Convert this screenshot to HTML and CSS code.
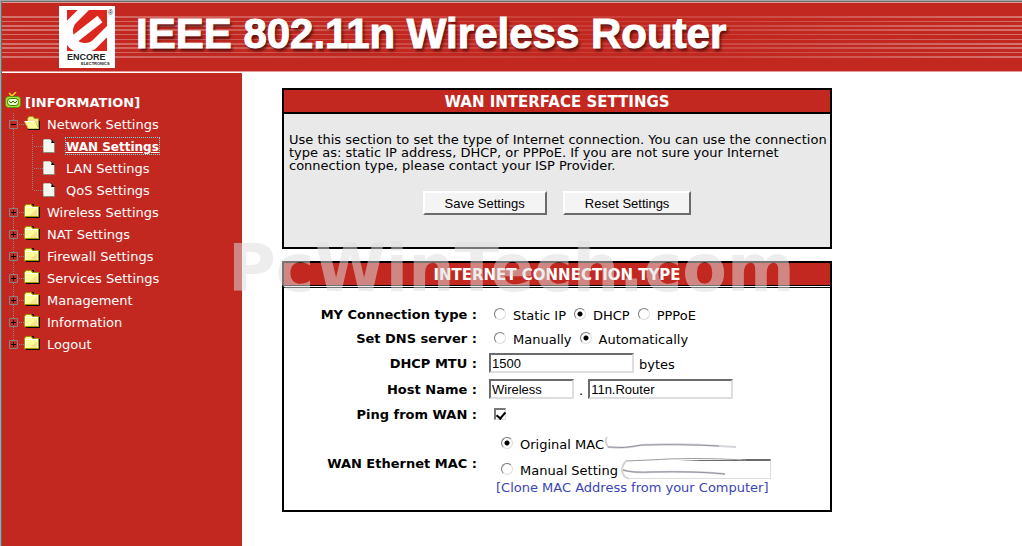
FILE: index.html
```html
<!DOCTYPE html>
<html lang="en">
<head>
  <meta charset="UTF-8">
  <meta name="viewport" content="width=device-width, initial-scale=1.0">
  <title>IEEE 802.11n Wireless Router</title>
  <link rel="stylesheet" href="styles.css">
</head>
<body>

<!-- shared tree icons -->
<svg class="icon-defs" width="0" height="0" aria-hidden="true">
  <symbol id="folder" viewBox="0 0 16 14">
    <path d="M2 13.5H15.5V3" fill="none" stroke="#000"/>
    <path d="M.5 12.5V2.5L2 .5H7L8.500 2.500H14.500V12.500Z" fill="#ffff9c" stroke="#9c9c00"/>
    <path d="M1.500 11.500V3.500H13.500" fill="none" stroke="#fff"/>
    <path d="M13 5V12H5Z" fill="#f7ce84" opacity=".6"/>
    <path d="M8 .5H9.500V2" fill="none" stroke="#000"/>
  </symbol>
  <symbol id="folder-open" viewBox="0 0 16 14">
    <path d="M4 13.500H15.500V5" fill="none" stroke="#000"/>
    <path d="M3.500 6V2.500L5 .5H9L10.500 2.500H14.500V12H3.500Z" fill="#f7e78c" stroke="#9c9c00"/>
    <path d="M.5 5.500H11.500L14.500 12.500H4.500Z" fill="#ffff9c" stroke="#cece63"/>
    <path d="M1 5.500H11" stroke="#fff"/>
  </symbol>
  <symbol id="plus" viewBox="0 0 9 9">
    <path d="M.5 .5H8.500V8.500H.5Z" fill="#c22820" stroke="#848484"/>
    <path d="M2 4.500H7M4.500 2V7" stroke="#000"/>
  </symbol>
  <symbol id="minus" viewBox="0 0 9 9">
    <path d="M.5 .5H8.500V8.500H.5Z" fill="#c22820" stroke="#848484"/>
    <path d="M2 4.500H7" stroke="#000"/>
  </symbol>
  <symbol id="branch" viewBox="0 0 40 22">
    <path class="dots" d="M11.500 0V22M17 11.500H22"/>
    <use href="#plus" x="7" y="7" width="9" height="9"/>
    <use href="#folder" x="22" y="3" width="16" height="14"/>
  </symbol>
  <symbol id="page" viewBox="0 0 12 14">
    <path d="M.5 .5H8L11.500 4V13.500H.5Z" fill="#f7f7f0" stroke="#8c8c7b"/>
    <path d="M1 12.500V1H7" fill="none" stroke="#fff"/>
    <path d="M8 0V4H12Z" fill="#000"/>
    <path d="M8 1V3.500" stroke="#fff"/>
  </symbol>
  <symbol id="leaf" viewBox="0 0 59 22">
    <path class="dots" d="M11.500 0V22M30.500 0V22M32 11.500H41"/>
    <use href="#page" x="41" y="4" width="12" height="14"/>
  </symbol>
  <symbol id="leaf-last" viewBox="0 0 59 22">
    <path class="dots" d="M11.500 0V22M30.500 0V11M32 11.500H41"/>
    <use href="#page" x="41" y="4" width="12" height="14"/>
  </symbol>
</svg>

<div class="frame">
  <header class="banner">
    <svg class="logo" width="56" height="62" viewBox="0 0 56 62" role="img" aria-label="Encore Electronics">
      <clipPath id="emblem"><rect x="8" y="4" width="40" height="41"/></clipPath>
      <rect width="56" height="62" fill="#fff"/>
      <g clip-path="url(#emblem)" fill="none">
        <rect x="8" y="4" width="40" height="41" fill="#dc261e"/>
        <path d="M24 27L54 -3" stroke="#fff" stroke-width="40" stroke-linecap="round"/>
        <path d="M26 25L56 -5" stroke="#dc261e" stroke-width="24" stroke-linecap="round"/>
        <path d="M13 35L41 13" stroke="#fff" stroke-width="8"/>
      </g>
      <text class="logo-name" x="8" y="54">ENCORE</text>
      <text class="logo-sub" x="22" y="59">ELECTRONICS</text>
      <text class="logo-mark" x="49" y="9">®</text>
    </svg>
    <h1>IEEE 802.11n Wireless Router</h1>
  </header>

  <div class="columns">
    <nav class="sidebar">
      <div class="tree-root">
        <svg width="16" height="17" viewBox="0 0 16 17" aria-hidden="true">
          <path d="M4 1L7 4L11 0" fill="none" stroke="#ffde21" stroke-width="1.500"/>
          <rect x=".5" y="4.500" width="15" height="11" rx="3" fill="#a5e731" stroke="#5a8c10"/>
          <rect x="2.500" y="6.500" width="11" height="7" rx="3" fill="#e7ffc6" stroke="#427300"/>
          <path d="M4 9L6 11L8 9L10 11L12 9" fill="none" stroke="#316300"/>
        </svg>
        <strong>[INFORMATION]</strong>
      </div>
      <ul class="tree">
        <li>
          <svg width="40" height="22" viewBox="0 0 40 22" aria-hidden="true">
            <path class="dots" d="M11.500 0V22M17 11.500H22"/>
            <use href="#minus" x="7" y="7" width="9" height="9"/>
            <use href="#folder-open" x="22" y="3" width="16" height="14"/>
          </svg>
          <a href="#">Network Settings</a>
        </li>
        <li><svg width="59" height="22" aria-hidden="true"><use href="#leaf"/></svg><a href="#" class="active">WAN Settings</a></li>
        <li><svg width="59" height="22" aria-hidden="true"><use href="#leaf"/></svg><a href="#">LAN Settings</a></li>
        <li><svg width="59" height="22" aria-hidden="true"><use href="#leaf-last"/></svg><a href="#">QoS Settings</a></li>
        <li><svg width="40" height="22" aria-hidden="true"><use href="#branch"/></svg><a href="#">Wireless Settings</a></li>
        <li><svg width="40" height="22" aria-hidden="true"><use href="#branch"/></svg><a href="#">NAT Settings</a></li>
        <li><svg width="40" height="22" aria-hidden="true"><use href="#branch"/></svg><a href="#">Firewall Settings</a></li>
        <li><svg width="40" height="22" aria-hidden="true"><use href="#branch"/></svg><a href="#">Services Settings</a></li>
        <li><svg width="40" height="22" aria-hidden="true"><use href="#branch"/></svg><a href="#">Management</a></li>
        <li><svg width="40" height="22" aria-hidden="true"><use href="#branch"/></svg><a href="#">Information</a></li>
        <li>
          <svg width="40" height="22" viewBox="0 0 40 22" aria-hidden="true">
            <path class="dots" d="M11.500 0V8M17 11.500H22"/>
            <use href="#plus" x="7" y="7" width="9" height="9"/>
            <use href="#folder" x="22" y="3" width="16" height="14"/>
          </svg>
          <a href="#">Logout</a>
        </li>
      </ul>
    </nav>

    <main class="content">
      <form>
        <section class="box box-intro">
          <h2>WAN INTERFACE SETTINGS</h2>
          <div class="intro">
            <p>Use this section to set the type of Internet connection. You can use the connection type as: static IP address, DHCP, or PPPoE. If you are not sure your Internet connection type, please contact your ISP Provider.</p>
            <div class="buttons">
              <button type="button">Save Settings</button>
              <button type="reset">Reset Settings</button>
            </div>
          </div>
        </section>

        <section class="box box-type">
          <h2>INTERNET CONNECTION TYPE</h2>
          <div class="fields">
            <div class="row">
              <span class="name">MY Connection type :</span>
              <div class="value options">
                <label><input type="radio" name="conn"><span>Static IP</span></label>
                <label><input type="radio" name="conn" checked><span>DHCP</span></label>
                <label><input type="radio" name="conn"><span>PPPoE</span></label>
              </div>
            </div>
            <div class="row">
              <span class="name">Set DNS server :</span>
              <div class="value options">
                <label><input type="radio" name="dns"><span>Manually</span></label>
                <label><input type="radio" name="dns" checked><span>Automatically</span></label>
              </div>
            </div>
            <div class="row row-text">
              <label class="name" for="mtu">DHCP MTU :</label>
              <div class="value"><input type="text" id="mtu" class="text" value="1500"><span>bytes</span></div>
            </div>
            <div class="row row-text">
              <label class="name" for="host">Host Name :</label>
              <div class="value">
                <input type="text" id="host" class="text short" value="Wireless">
                <span>.</span>
                <input type="text" class="text" aria-label="Domain name" value="11n.Router">
              </div>
            </div>
            <div class="row">
              <label class="name" for="ping">Ping from WAN :</label>
              <div class="value options"><input type="checkbox" id="ping" checked></div>
            </div>
            <div class="row">
              <span class="name">WAN Ethernet MAC :</span>
              <div class="value mac">
                <div class="mac-line">
                  <label><input type="radio" name="mac" checked><span>Original MAC</span></label>
                  <svg width="136" height="14" viewBox="0 0 136 14" aria-hidden="true">
                    <path d="M3 1Q0 5 4 11Q20 13 38 9Q80 7 115 10L132 11" fill="none" stroke="#d4d4d8" stroke-width="2"/>
                    <path d="M4 11Q20 13 38 9Q80 8 115 10" fill="none" stroke="#9494a0"/>
                  </svg>
                </div>
                <div class="mac-line">
                  <label><input type="radio" name="mac"><span>Manual Setting</span></label>
                  <span class="mac-input">
                    <input type="text" class="text" aria-label="MAC address">
                    <svg width="150" height="22" viewBox="0 0 150 22" aria-hidden="true">
                      <path d="M0 0H120V2L80 2L10 5L3 10L6 22H0Z" fill="#fff"/>
                      <path d="M6 2Q-2 10 3 18L8 21" fill="none" stroke="#d4d4d8" stroke-width="2"/>
                      <path d="M6 3L28 2Q70 -1 125 2" fill="none" stroke="#9b9ba3"/>
                      <path d="M2 12Q12 15 30 14Q75 13 104 16" fill="none" stroke="#d0d0d4" stroke-width="2"/>
                      <path d="M2 12Q12 15 30 14Q75 13 104 16" fill="none" stroke="#9494a0"/>
                    </svg>
                  </span>
                </div>
                <a href="#">[Clone MAC Address from your Computer]</a>
              </div>
            </div>
          </div>
        </section>
      </form>
    </main>
  </div>
</div>

<div class="watermark" aria-hidden="true">PcWinTech.com</div>

</body>
</html>
```

FILE: styles.css
```css
* {
  box-sizing: border-box;
}

body {
  margin: 0;
  font-family: Verdana, "DejaVu Sans", sans-serif;
  font-size: 13px;
  line-height: 13px;
  color: #000;
  background-color: #fff;
}

.icon-defs {
  position: absolute;
}

.dots {
  fill: none;
  stroke: #948484;
  stroke-dasharray: 1 1;
}

.frame {
  display: flex;
  flex-direction: column;
  min-height: 100vh;
  border-top: 1px solid #a5a5a5;
  border-left: 1px solid #a5a5a5;
  box-shadow: inset 1px 1px 0 #6b6b6b;
  padding: 1px 0 0 1px;
}

/* banner */
.banner {
  display: flex;
  align-items: flex-start;
  gap: 21px;
  height: 70px;
  padding: 3px 0 0 57px;
  border-top: 1px solid #e39a96;
  border-bottom: 1px solid #e39a96;
  background:
    linear-gradient(90deg, transparent, rgba(194, 40, 32, 0.7) 55%, rgba(194, 40, 32, 0.6) 70%, transparent),
    linear-gradient(
      #c22820 13px,
      #d4736e 13px 15px, #c22820 15px 18px,
      #d4736e 18px 19px, #c22820 19px 22px,
      #d4736e 22px 24px, #c22820 24px 26px,
      #d4736e 26px 28px, #c22820 28px 31px,
      #d4736e 31px 32px, #c22820 32px 36px,
      #d4736e 36px 37px, #c22820 37px 40px,
      #d4736e 40px 42px, #c22820 42px 44px,
      #d4736e 44px 46px, #c22820 46px 49px,
      #d4736e 49px 50px, #c22820 50px 53px,
      #d4736e 53px 55px, #c22820 55px);
}

.banner h1 {
  margin: 8px 0 0;
  font-family: Arial, "Liberation Sans", sans-serif;
  font-size: 42px;
  font-weight: bold;
  line-height: 40px;
  color: #fff;
  -webkit-text-stroke: 1px #fff;
  text-shadow: 2px 3px 3px rgba(50, 0, 0, 0.7);
  white-space: nowrap;
}

.logo {
  flex: none;
}

.logo-name {
  font: bold 9px "Liberation Sans", sans-serif;
  fill: #222;
}

.logo-sub {
  font: bold 4px "Liberation Sans", sans-serif;
  fill: #222;
}

.logo-mark {
  font: 7px "Liberation Sans", sans-serif;
  fill: #222;
}

.columns {
  display: flex;
  flex: 1;
  margin-top: 1px;
}

/* menu tree */
.sidebar {
  flex: none;
  width: 240px;
  padding-top: 18px;
  background-color: #c22820;
  color: #fff;
}

.tree-root {
  display: flex;
  align-items: center;
  gap: 4px;
  height: 22px;
  padding-left: 3px;
}

.tree-root svg {
  margin-bottom: 4px;
}

.tree {
  margin: 0;
  padding: 0;
  list-style: none;
}

.tree li {
  display: flex;
  align-items: center;
  gap: 5px;
  height: 22px;
}

.tree a {
  padding-top: 2px;
  color: #fff;
  text-decoration: none;
  line-height: 14px;
}

.tree svg {
  flex: none;
}

.tree a.active {
  font-size: 12px;
  font-weight: bold;
  text-decoration: underline;
  outline: 1px dotted #6be0e0;
}

/* settings boxes */
.content {
  flex: 1;
  padding: 15px 20px 20px 40px;
}

.box {
  max-width: 550px;
  border: 2px solid #000;
}

.box h2 {
  margin: 0;
  padding-top: 2px;
  font-size: 15px;
  line-height: 20px;
  text-align: center;
  color: #fff;
  background-color: #c22820;
  border-bottom: 2px solid #000;
}

.box-intro {
  margin-bottom: 12px;
}

.intro {
  padding: 19px 0 32px;
  background-color: #e9e9e9;
}

.intro p {
  margin: 0 0 19px;
  padding-left: 5px;
}

.buttons {
  display: flex;
  justify-content: center;
  gap: 16px;
}

.buttons button {
  height: 24px;
  padding: 0 20px;
  font: 13px Arial, "Liberation Sans", sans-serif;
  color: #000;
  background-color: #f4f4f4;
  border: 2px solid;
  border-color: #fff #6b6b6b #6b6b6b #fff;
}

.box-type h2 {
  border-bottom: 3px double #000;
  background-clip: padding-box;
}

.fields {
  padding: 14px 0 10px;
}

.row {
  display: grid;
  grid-template-columns: 193px 1fr;
  column-gap: 12px;
  align-items: center;
  min-height: 24px;
}

.row-text {
  min-height: 26px;
}

.name {
  font-weight: bold;
  text-align: right;
}

.value {
  display: flex;
  align-items: center;
  gap: 5px;
}

.value span {
  padding-top: 2px;
}

.options {
  gap: 8px;
  padding-left: 5px;
}

.value label {
  display: flex;
  align-items: center;
  gap: 7px;
}

.text {
  width: 145px;
  height: 20px;
  padding: 0 1px;
  font: 13px Arial, "Liberation Sans", sans-serif;
  border: 2px solid;
  border-color: #6b6b6b #dedede #dedede #6b6b6b;
  background-color: #fff;
}

.text.short {
  width: 85px;
}

input[type="radio"],
input[type="checkbox"] {
  appearance: none;
  flex: none;
  width: 12px;
  height: 12px;
  margin: 0;
  border: 1px solid;
  border-color: #777 #ddd #ddd #777;
  background: #fff;
}

input[type="radio"] {
  border-radius: 50%;
}

input[type="radio"]:checked {
  background: radial-gradient(circle, #000 2px, #fff 3px);
}

input[type="checkbox"] {
  border-width: 2px 1px 1px 2px;
}

input[type="checkbox"]:checked::before {
  content: "";
  display: block;
  width: 4px;
  height: 7px;
  margin-left: 2px;
  border: solid #000;
  border-width: 0 2px 2px 0;
  transform: rotate(40deg);
}

.mac {
  flex-direction: column;
  align-items: flex-start;
  gap: 2px;
  padding: 5px 0 6px 12px;
}

.mac-line {
  display: flex;
  align-items: center;
  height: 24px;
}

.mac > a {
  margin: -2px 0 0 -5px;
  color: #3a45b5;
  text-decoration: none;
}

.value .mac-input {
  position: relative;
  padding: 0;
  margin-left: 3px;
}

.mac-input .text {
  display: block;
  width: 150px;
  border-width: 2px 1px 1px;
}

.mac-input svg {
  position: absolute;
  top: -1px;
  left: 0;
  pointer-events: none;
}

.watermark {
  position: absolute;
  top: 232px;
  left: 228px;
  font-size: 65px;
  line-height: 74px;
  font-weight: bold;
  color: rgba(221, 221, 221, 0.53);
  pointer-events: none;
}
```
